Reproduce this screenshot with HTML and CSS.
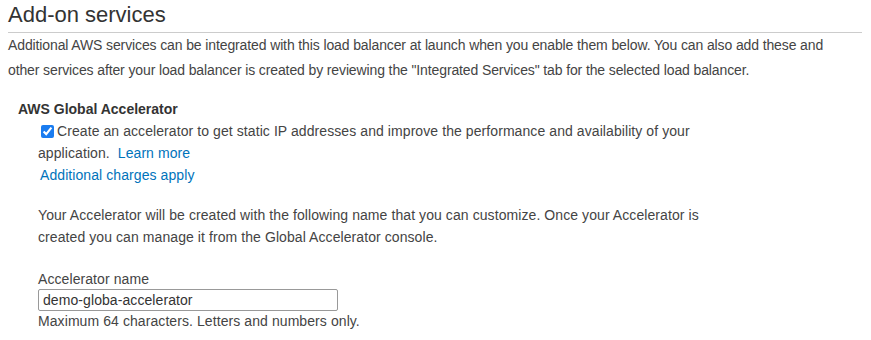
FILE: index.html
```html
<!DOCTYPE html>
<html lang="en">
<head>
    <meta charset="UTF-8">
    <meta name="viewport" content="width=device-width, initial-scale=1.0">
    <title>Add-on services</title>
    <link rel="stylesheet" href="styles.css">
</head>
<body>

    <div class="page">
        <h2 class="section-title">Add-on services</h2>
        <p class="intro">Additional AWS services can be integrated with this load balancer at launch when you enable them below. You can also add these and other services after your load balancer is created by reviewing the "Integrated Services" tab for the selected load balancer.</p>

        <!-- Global Accelerator option -->
        <div class="service">
            <div class="service-name">AWS Global Accelerator</div>
            <div class="service-body">
                <label class="check-line">
                    <input type="checkbox" class="check" checked><span>Create an accelerator to get static IP addresses and improve the performance and availability of your</span>
                </label>
                <div class="check-line"><span>application.</span> <a href="#" class="link">Learn more</a></div>
                <div class="charges"><a href="#" class="link">Additional charges apply</a></div>

                <p class="note">Your Accelerator will be created with the following name that you can customize. Once your Accelerator is created you can manage it from the Global Accelerator console.</p>

                <label for="accName" class="field-label">Accelerator name</label>
                <input type="text" id="accName" class="field-input" value="demo-globa-accelerator">
                <div class="field-help">Maximum 64 characters. Letters and numbers only.</div>
            </div>
        </div>
    </div>

</body>
</html>
```

FILE: styles.css
```css
body {
    font-family: 'Liberation Sans', Arial, sans-serif;
    font-size: 14px;
    color: #444;
    background-color: #fff;
    margin: 0;
    padding: 0;
}

.page {
    padding: 0 9px 0 8px;
}

.section-title {
    font-size: 22px;
    font-weight: normal;
    line-height: 26px;
    color: #333;
    margin: 0;
    padding: 2px 0 4px;
    border-bottom: 1px solid #ccc;
}

.intro {
    margin: 0;
    max-width: 840px;
    line-height: 25px;
    letter-spacing: -0.12px;
}

.service {
    margin-top: 15px;
    padding-left: 10px;
}

.service-name {
    font-weight: bold;
    line-height: 22px;
    color: #333;
}

.service-body {
    padding-left: 20px;
    width: 690px;
    letter-spacing: 0.08px;
}

.check-line {
    display: block;
    line-height: 22px;
    white-space: nowrap;
}

.check-line .link {
    margin-left: 4px;
}

.check {
    width: 13px;
    height: 13px;
    margin: 0 3px 0 3px;
    vertical-align: -2px;
    accent-color: #1a7cf0;
}

.link {
    color: #0073bb;
    text-decoration: none;
}

.charges {
    line-height: 22px;
    padding-left: 2px;
}

.note {
    margin: 18px 0 0;
    line-height: 22px;
}

.field-label {
    display: block;
    margin-top: 21px;
    line-height: 20px;
}

.field-input {
    display: block;
    box-sizing: border-box;
    width: 300px;
    height: 22px;
    padding: 0 4px;
    border: 1px solid #999;
    border-radius: 2px;
    font-family: 'Liberation Sans', Arial, sans-serif;
    font-size: 14px;
    letter-spacing: 0.08px;
    color: #333;
}

.field-help {
    line-height: 20px;
}
```
